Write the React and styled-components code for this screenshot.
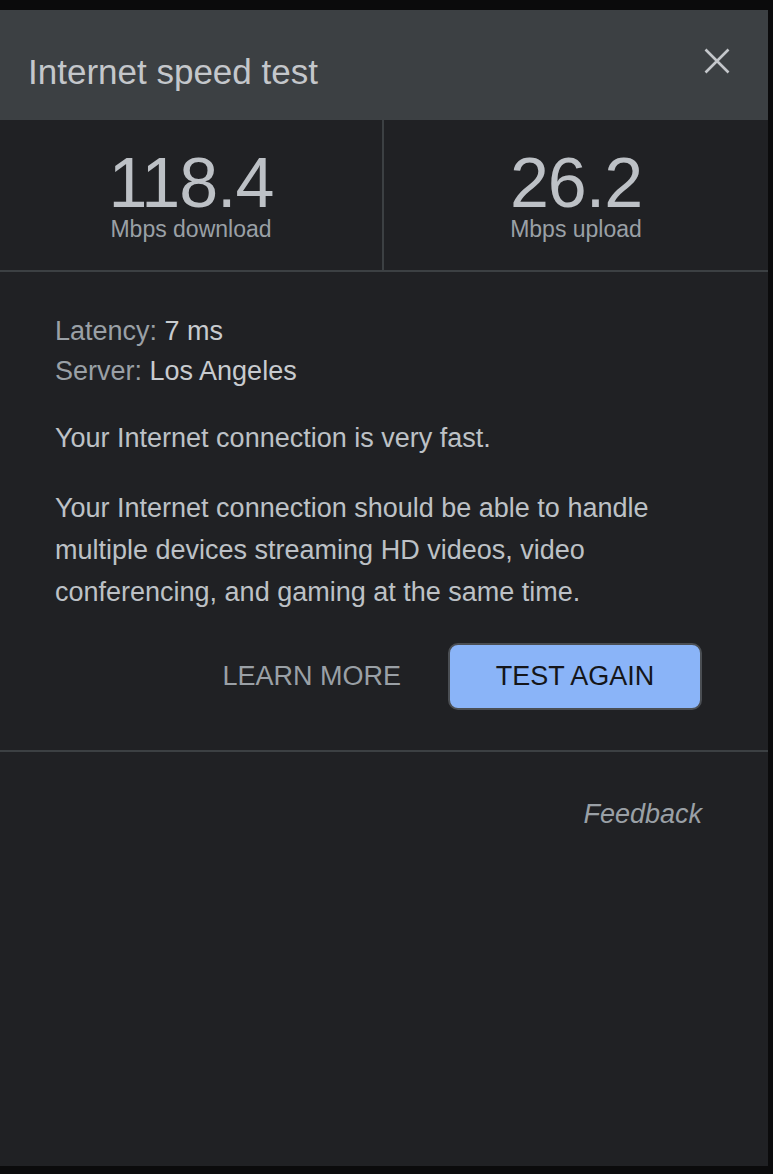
import React from 'react';
import styled, { createGlobalStyle } from 'styled-components';

const GlobalStyle = createGlobalStyle`
    html, body {
        margin: 0;
        padding: 0;
        background: #0b0b0c;
    }
    body {
        font-family: "Liberation Sans", Arial, Helvetica, sans-serif;
    }
`;

const Page = styled.div`
    width: 773px;
    height: 1174px;
    padding-top: 10px;
    box-sizing: border-box;
    overflow: hidden;
`;

const Panel = styled.div`
    width: 768px;
    height: 1156px;
    background-color: #202124;
    display: flex;
    flex-direction: column;
`;

const Header = styled.div`
    height: 110px;
    box-sizing: border-box;
    background-color: #3c4043;
    display: flex;
    justify-content: space-between;
    align-items: flex-start;
    padding: 27px 27px 0 28px;
`;

const Title = styled.h1`
    margin: 17px 0 0;
    font-size: 35px;
    line-height: 35px;
    font-weight: 400;
    color: #c4c7cb;
`;

const CloseButton = styled.button`
    width: 48px;
    height: 48px;
    padding: 0;
    border: none;
    background: transparent;
    display: flex;
    align-items: center;
    justify-content: center;
    color: #c4c7cb;
    cursor: pointer;
`;

const StatsRow = styled.div`
    display: grid;
    grid-template-columns: 382px 2px 1fr;
    height: 152px;
    border-bottom: 2px solid #3c4043;
    box-sizing: border-box;
`;

const StatDivider = styled.div`
    background-color: #3c4043;
`;

const Stat = styled.div`
    display: flex;
    flex-direction: column;
    align-items: center;
    padding-top: 31px;
`;

const StatValue = styled.span`
    font-size: 70px;
    line-height: 64px;
    color: #bdc1c6;
    letter-spacing: -1px;
`;

const StatLabel = styled.span`
    margin-top: 1px;
    font-size: 23px;
    line-height: 26px;
    color: #9aa0a6;
`;

const Content = styled.div`
    padding: 39px 66px 0 55px;
    border-bottom: 2px solid #3c4043;
`;

const InfoList = styled.div`
    display: flex;
    flex-direction: column;
`;

const InfoLine = styled.div`
    font-size: 27px;
    line-height: 40px;
    color: #9aa0a6;
`;

const InfoValue = styled.span`
    color: #c8cbcf;
`;

const Text = styled.p`
    margin: ${props => props.top}px 0 0;
    font-size: 27px;
    line-height: 42px;
    color: #bdc1c6;
`;

const Actions = styled.div`
    display: flex;
    justify-content: flex-end;
    align-items: center;
    margin: 30px 0 40px;
`;

const LinkButton = styled.button`
    border: none;
    background: transparent;
    padding: 0;
    margin-right: 47px;
    font-family: inherit;
    font-size: 27px;
    color: #9aa0a6;
    cursor: pointer;
`;

const PrimaryButton = styled.button`
    width: 254px;
    height: 67px;
    box-sizing: border-box;
    border: 2px solid #4a4e53;
    border-radius: 10px;
    background-color: #8ab4f8;
    font-family: inherit;
    font-size: 27px;
    color: #15161a;
    cursor: pointer;
`;

const Footer = styled.div`
    display: flex;
    justify-content: flex-end;
    padding: 42px 66px 0 55px;
`;

const FeedbackLink = styled.a`
    font-size: 27px;
    font-style: italic;
    line-height: 40px;
    color: #9aa0a6;
    text-decoration: none;
`;

const CloseIcon = () => (
    <svg width="26" height="26" viewBox="0 0 26 26" fill="none">
        <path d="M1.5 1.5 L24.5 24.5 M24.5 1.5 L1.5 24.5" stroke="currentColor" strokeWidth="2.6" />
    </svg>
);

const App = () => {
    return (
        <Page>
            <GlobalStyle />
            <Panel>
                <Header>
                    <Title>Internet speed test</Title>
                    <CloseButton aria-label="Close">
                        <CloseIcon />
                    </CloseButton>
                </Header>
                <StatsRow>
                    <Stat>
                        <StatValue>118.4</StatValue>
                        <StatLabel>Mbps download</StatLabel>
                    </Stat>
                    <StatDivider />
                    <Stat>
                        <StatValue>26.2</StatValue>
                        <StatLabel>Mbps upload</StatLabel>
                    </Stat>
                </StatsRow>
                <Content>
                    <InfoList>
                        <InfoLine>Latency: <InfoValue>7 ms</InfoValue></InfoLine>
                        <InfoLine>Server: <InfoValue>Los Angeles</InfoValue></InfoLine>
                    </InfoList>
                    <Text top={26}>Your Internet connection is very fast.</Text>
                    <Text top={28}>
                        Your Internet connection should be able to handle multiple devices streaming HD videos, video conferencing, and gaming at the same time.
                    </Text>
                    <Actions>
                        <LinkButton>LEARN MORE</LinkButton>
                        <PrimaryButton>TEST AGAIN</PrimaryButton>
                    </Actions>
                </Content>
                <Footer>
                    <FeedbackLink href="#">Feedback</FeedbackLink>
                </Footer>
            </Panel>
        </Page>
    );
};

export default App;
